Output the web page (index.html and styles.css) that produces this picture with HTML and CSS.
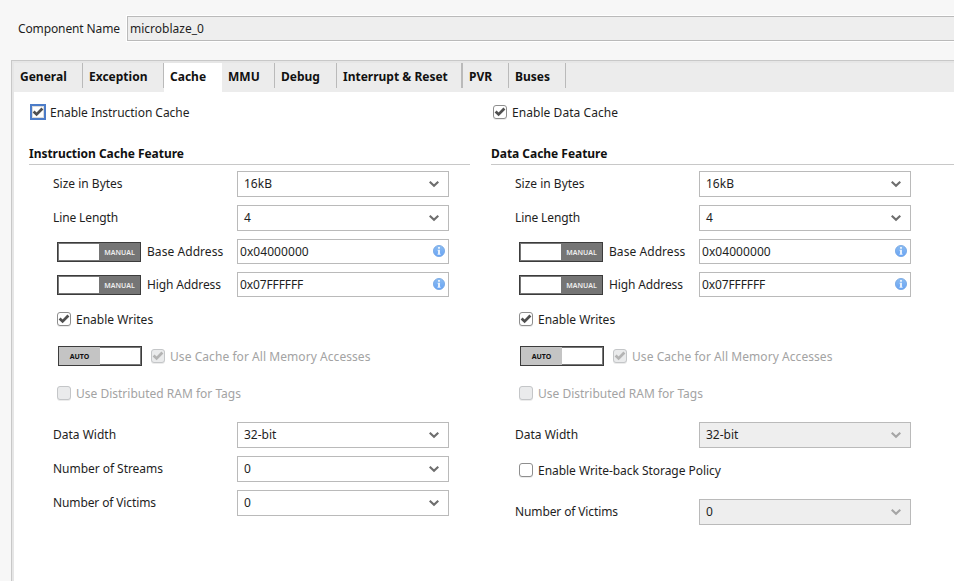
FILE: index.html
```html
<!DOCTYPE html>
<html lang="en">
<head>
<meta charset="utf-8">
<title>microblaze_0</title>
<link rel="stylesheet" href="styles.css">
</head>
<body>
<svg class="defs" aria-hidden="true">
  <symbol id="check" viewBox="0 0 14 14"><path d="M2.6 6.6 L5.6 9.4 L11.4 3.6" fill="none" stroke="currentColor" stroke-width="2.8"/></symbol>
  <symbol id="chevron" viewBox="0 0 10 8"><path d="M.7 1.7 L5 5.8 L9.3 1.7" fill="none" stroke="currentColor" stroke-width="2.2"/></symbol>
  <linearGradient id="blue" x1="0" y1="0" x2="0" y2="1"><stop offset="0" stop-color="#8cbcf0"/><stop offset="1" stop-color="#67a3f5"/></linearGradient>
  <symbol id="info" viewBox="0 0 12 12"><circle cx="6" cy="6" r="5.6" fill="url(#blue)" stroke="#74a5e2" stroke-width=".8"/><path d="M5 2h2v1.7H5zM4.6 4.8H7v4h.6v1H4.5v-1H5V5.7h-.4z" fill="#e8f1fc"/></symbol>
</svg>
<header class="name-bar">
  <span class="name-label tight">Component Name</span>
  <div class="name-field">microblaze_0</div>
</header>
<main class="panel">
  <nav class="tabs">
    <div class="tab general"><span>General</span></div>
    <div class="tab exception"><span>Exception</span></div>
    <div class="tab cache active"><span>Cache</span></div>
    <div class="tab mmu"><span>MMU</span></div>
    <div class="tab debug"><span>Debug</span></div>
    <div class="tab interrupt"><span>Interrupt &amp; Reset</span></div>
    <div class="tab pvr"><span>PVR</span></div>
    <div class="tab buses"><span>Buses</span></div>
  </nav>
  <div class="columns">
    <section class="column">
      <div class="row enable"><i class="box focused"><svg><use href="#check"/></svg></i><span class="text snug">Enable Instruction Cache</span></div>
      <h2>Instruction Cache Feature</h2>
      <div class="row field first"><span class="label">Size in Bytes</span><div class="select">16kB<svg><use href="#chevron"/></svg></div></div>
      <div class="row field"><span class="label tight">Line Length</span><div class="select">4<svg><use href="#chevron"/></svg></div></div>
      <div class="row address"><div class="toggle"><span></span><span class="manual">MANUAL</span></div><span class="label loose">Base Address</span><div class="input"><span class="loose">0x04000000</span><svg><use href="#info"/></svg></div></div>
      <div class="row address"><div class="toggle"><span></span><span class="manual">MANUAL</span></div><span class="label tight">High Address</span><div class="input"><span class="tight">0x07FFFFFF</span><svg><use href="#info"/></svg></div></div>
      <div class="row option"><i class="box"><svg><use href="#check"/></svg></i><span class="text">Enable Writes</span></div>
      <div class="row accesses"><div class="toggle"><span class="auto">AUTO</span><span></span></div><i class="box off"><svg><use href="#check"/></svg></i><span class="text dim loose">Use Cache for All Memory Accesses</span></div>
      <div class="row option"><i class="box off"></i><span class="text dim">Use Distributed RAM for Tags</span></div>
      <div class="row field spaced"><span class="label">Data Width</span><div class="select">32-bit<svg><use href="#chevron"/></svg></div></div>
      <div class="row field"><span class="label snug">Number of Streams</span><div class="select">0<svg><use href="#chevron"/></svg></div></div>
      <div class="row field"><span class="label tight">Number of Victims</span><div class="select">0<svg><use href="#chevron"/></svg></div></div>
    </section>
    <section class="column">
      <div class="row enable"><i class="box"><svg><use href="#check"/></svg></i><span class="text loose">Enable Data Cache</span></div>
      <h2>Data Cache Feature</h2>
      <div class="row field first"><span class="label">Size in Bytes</span><div class="select">16kB<svg><use href="#chevron"/></svg></div></div>
      <div class="row field"><span class="label tight">Line Length</span><div class="select">4<svg><use href="#chevron"/></svg></div></div>
      <div class="row address"><div class="toggle"><span></span><span class="manual">MANUAL</span></div><span class="label loose">Base Address</span><div class="input"><span class="loose">0x04000000</span><svg><use href="#info"/></svg></div></div>
      <div class="row address"><div class="toggle"><span></span><span class="manual">MANUAL</span></div><span class="label tight">High Address</span><div class="input"><span class="tight">0x07FFFFFF</span><svg><use href="#info"/></svg></div></div>
      <div class="row option"><i class="box"><svg><use href="#check"/></svg></i><span class="text">Enable Writes</span></div>
      <div class="row accesses"><div class="toggle"><span class="auto">AUTO</span><span></span></div><i class="box off"><svg><use href="#check"/></svg></i><span class="text dim loose">Use Cache for All Memory Accesses</span></div>
      <div class="row option"><i class="box off"></i><span class="text dim">Use Distributed RAM for Tags</span></div>
      <div class="row field spaced"><span class="label">Data Width</span><div class="select disabled">32-bit<svg><use href="#chevron"/></svg></div></div>
      <div class="row option"><i class="box"></i><span class="text snug">Enable Write-back Storage Policy</span></div>
      <div class="row field spaced"><span class="label tight">Number of Victims</span><div class="select disabled">0<svg><use href="#chevron"/></svg></div></div>
    </section>
  </div>
</main>
</body>
</html>
```
FILE: styles.css
```css
* { box-sizing: border-box; }
body {
  margin: 0;
  height: 581px;
  overflow: hidden;
  display: flex;
  flex-direction: column;
  background: #f7f7f7;
  color: #1e1e1e;
  font: 12px/16px "Noto Sans", sans-serif;
  white-space: nowrap;
}
.defs { position: absolute; width: 0; height: 0; }
.tight { letter-spacing: -.12px; }
.snug { letter-spacing: -.04px; }
.loose { letter-spacing: .06px; }
.name-bar {
  height: 60px;
  flex: none;
  display: flex;
  align-items: flex-start;
  padding: 15px 0 0 18px;
}
.name-label { width: 109px; padding-top: 6px; }
.name-field {
  flex: 1;
  height: 25px;
  margin-top: 1px;
  padding: 4px 0 0 2px;
  border: 1px solid #bababa;
  border-right: 0;
  background: #eee;
  box-shadow: 0 0 0 1px #fff;
}
.panel {
  flex: 1;
  margin-left: 11px;
  border: solid #c8c8c8;
  border-width: 1px 0 0 1px;
  background: #e6e6e6;
  padding: 2px 0 0 2px;
  display: flex;
  flex-direction: column;
}
.tabs {
  height: 29px;
  flex: none;
  display: flex;
  background: #ececec;
  color: #111;
  font-weight: 700;
}
.tab {
  height: 25px;
  flex: none;
  padding: 6px 0 0 6px;
  border-right: 1px solid #bababa;
}
.general { width: 69px; }
.exception { width: 81px; }
.cache { width: 58px; }
.mmu { width: 53px; }
.debug { width: 62px; }
.interrupt { width: 126px; border-right-width: 2px; }
.pvr { width: 46px; }
.buses { width: 57px; }
.active { height: 29px; background: #fff; border-right: 0; }
.columns {
  flex: 1;
  background: #fff;
  display: grid;
  grid-template-columns: 441px 1fr;
  column-gap: 21px;
  padding-left: 15px;
}
.row { display: flex; align-items: center; height: 36px; }
.text { padding-top: 2px; }
.enable { height: 40px; padding-left: 2px; }
h2 {
  height: 33px;
  margin: 0;
  padding-top: 14px;
  border-bottom: 1px solid #c8c8c8;
  color: #111;
  font-size: 12px;
  line-height: 16px;
  letter-spacing: -.03px;
}
.field { height: 34px; padding-left: 24px; }
.first { margin-top: 2px; }
.spaced { margin-top: 7px; }
.field .label { width: 184px; }
.address { height: 33px; padding-left: 28px; }
.address .label { width: 90px; margin-left: 6px; flex: none; }
.option { padding-left: 28px; }
.accesses { height: 38px; padding-left: 29px; }
.accesses .box { margin-left: 9px; }
.select, .input {
  width: 212px;
  height: 26px;
  flex: none;
  display: flex;
  align-items: center;
  justify-content: space-between;
  border: 1px solid #bababa;
  background: #fff;
  padding: 0 9px 0 6px;
}
.select svg { width: 10px; height: 8px; color: #6e6e6e; }
.disabled { background: #eee; }
.disabled svg { color: #a5a5a5; }
.input { height: 25px; padding: 0 3px 0 2px; }
.input svg { width: 12px; height: 12px; margin-bottom: 1px; }
.box {
  width: 14px;
  height: 14px;
  flex: none;
  margin-right: 5px;
  border: 1px solid #8e8e8e;
  border-radius: 3px;
  background: #fff;
  color: #505050;
  box-shadow: 0 1px 0 #ececec;
}
.box svg { display: block; width: 14px; height: 14px; margin: -1px; }
.enable .focused {
  width: 16px;
  height: 16px;
  margin: 0 4px 0 -1px;
  border: 2px solid #4c7cc8;
  border-radius: 0;
  box-shadow: inset 0 0 0 1px #dcdcdc;
}
.off {
  border-color: #c4c6c8;
  background: #eaebec;
  color: #b4b4b4;
}
.dim { color: #a3a3a3; }
.toggle {
  width: 84px;
  height: 20px;
  flex: none;
  display: flex;
  border: 1px solid #3c3c3c;
  box-shadow: inset 0 0 0 1px #777;
  font-size: 7px;
  line-height: 20px;
  font-weight: 700;
  text-align: center;
}
.toggle span { width: 41px; height: 18px; }
.manual { background: #757575; color: #eee; font-weight: 600; }
.auto { background: #c4c4c4; color: #111; }
```
